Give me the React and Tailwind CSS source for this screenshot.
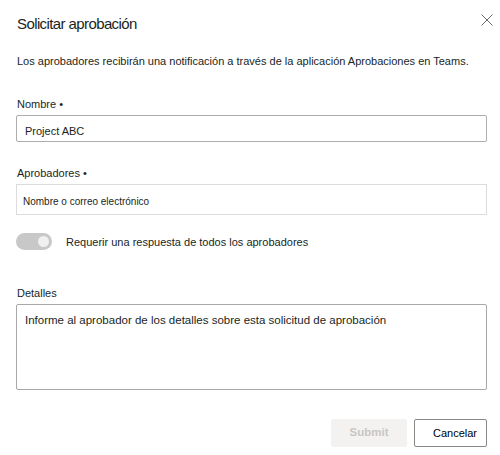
export default function App() {
  return (
    <div
      className="w-[500px] h-[455px] bg-white text-[#201f1e] flex flex-col"
      style={{ fontFamily: '"Liberation Sans", Arial, sans-serif' }}
    >
      <div className="flex items-start justify-between pt-[14px] pl-[17px] pr-[7px]">
        <h1 className="text-[15px] leading-[20px] tracking-[-0.6px] text-[#201f1e]">Solicitar aprobación</h1>
        <button type="button" className="mt-0 text-[#6b6a69]" aria-label="Cerrar">
          <svg width="12" height="12" viewBox="0 0 12 12" stroke="currentColor" strokeWidth="1">
            <path d="M0.5 0.5 L11.5 11.5 M11.5 0.5 L0.5 11.5" />
          </svg>
        </button>
      </div>

      <div className="flex flex-col pl-4 pr-[13px]">
        <p className="mt-[19px] pl-px text-[11px] leading-[16px]">
          Los aprobadores recibirán una notificación a través de la aplicación Aprobaciones en Teams.
        </p>

        <label className="mt-[27px] pl-px text-[11px] leading-[16px]">Nombre •</label>
        <div className="mt-[3px] h-[27px] border border-[#adadad] rounded-[2px] pl-[8px] pt-[7px] text-[11px] leading-[16px]">
          Project ABC
        </div>

        <label className="mt-[23px] pl-px text-[11px] leading-[16px]">Aprobadores •</label>
        <div className="mt-[3px] h-[31px] border border-[#dcdcdc] pl-[6px] pt-[10px] text-[10px] leading-[14px]">
          Nombre o correo electrónico
        </div>

        <div className="mt-[18px] flex items-center">
          <div className="w-[36px] h-[17px] rounded-full bg-[#c8c8c8] flex items-center justify-end pr-[3px]">
            <div className="w-[11px] h-[11px] rounded-full bg-[#f0f0f0]" />
          </div>
          <span className="ml-[14px] text-[11px] leading-[16px]">Requerir una respuesta de todos los aprobadores</span>
        </div>

        <label className="mt-[35px] pl-px text-[11px] leading-[16px]">Detalles</label>
        <div className="mt-[3px] h-[86px] border border-[#a8a8a8] rounded-[2px] pl-[8px] pt-[7px] text-[11.5px] leading-[16px]">
          Informe al aprobador de los detalles sobre esta solicitud de aprobación
        </div>

        <div className="mt-[29px] flex justify-end gap-[7px]">
          <button
            type="button"
            disabled
            className="w-[76px] h-[28px] rounded-[2px] bg-[#f3f2f1] text-[#c8c6c4] text-[11.5px] font-bold"
          >
            Submit
          </button>
          <button
            type="button"
            className="w-[73px] h-[28px] rounded-[2px] border border-[#8a8886] bg-white text-[11px] text-black text-left pl-[18px]"
          >
            Cancelar
          </button>
        </div>
      </div>
    </div>
  );
}
